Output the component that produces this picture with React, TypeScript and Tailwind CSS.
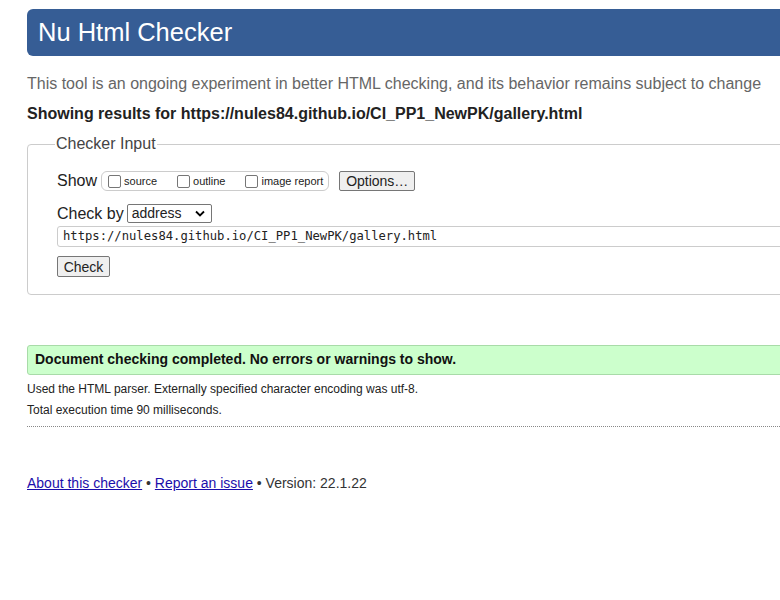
import React from "react";

const sans = { fontFamily: '"Liberation Sans", Arial, sans-serif' };

const Box = () => (
  <span className="inline-block w-[13px] h-[13px] border border-[#767676] rounded-[2px] bg-white mr-[3px] align-[-2px]" />
);

export default function App() {
  return (
    <div className="w-[780px] h-[600px] overflow-hidden bg-white text-[#222]" style={sans}>
      <div className="w-[900px] pl-[27px] pt-[9px]">
        <header className="h-[47px] bg-[#365d95] rounded-l-[6px] flex items-center pl-[11px]">
          <h1 className="text-white text-[25.5px] leading-none">Nu Html Checker</h1>
        </header>

        <p className="mt-[19px] text-[16px] text-[#666] leading-[18px]">
          This tool is an ongoing experiment in better HTML checking, and its behavior remains subject to change
        </p>
        <p className="mt-[12px] text-[16px] font-bold text-[#222] leading-[18px]">
          Showing results for https://nules84.github.io/CI_PP1_NewPK/gallery.html
        </p>

        <fieldset className="mt-[12px] border border-[#ccc] rounded-[4px] pl-[29px] pr-0 pb-[15px] pt-[6px]">
          <legend className="text-[16px] text-[#444] px-[1px] ml-[-2px] leading-[18px]">Checker Input</legend>

          <div className="flex items-center h-[20px] mt-[12px]">
            <span className="text-[16px] mr-[4px]">Show</span>
            <span className="h-[20px] border border-[#ccc] rounded-[6px] flex items-center pl-[6px] pr-[5px] text-[11px]">
              <label className="flex items-center"><Box />source</label>
              <label className="flex items-center ml-[20px]"><Box />outline</label>
              <label className="flex items-center ml-[20px]"><Box />image report</label>
            </span>
            <button className="ml-[10px] h-[20px] w-[76px] border border-[#767676] rounded-[2px] bg-[#efefef] text-[14px] leading-none">
              Options…
            </button>
          </div>

          <div className="flex items-center mt-[13px] h-[19px]">
            <span className="text-[16px] mr-[3px]">Check by</span>
            <span className="h-[19px] w-[85px] border border-[#767676] rounded-[2px] bg-white flex items-center justify-between pl-[4px] pr-[6px] text-[14px]">
              address
              <svg width="10" height="7" viewBox="0 0 10 7">
                <path d="M1 1.5 L5 5.5 L9 1.5" stroke="#000" strokeWidth="1.8" fill="none" />
              </svg>
            </span>
          </div>

          <div className="mt-[3px] h-[21px] border border-[#ccc] rounded-l-[3px] flex items-center pl-[5px] text-[12.2px]" style={{ fontFamily: '"DejaVu Sans Mono", monospace' }}>
            https://nules84.github.io/CI_PP1_NewPK/gallery.html
          </div>

          <button className="mt-[9px] h-[21px] w-[53px] border border-[#767676] rounded-[2px] bg-[#efefef] text-[14px] leading-none">
            Check
          </button>
        </fieldset>

        <div className="mt-[50px] h-[30px] bg-[#ccffcc] border border-[#a8dba8] rounded-l-[3px] flex items-center pl-[7px] text-[14px] font-bold text-[#111]">
          Document checking completed. No errors or warnings to show.
        </div>

        <p className="mt-[7px] text-[12px] leading-[14px]">Used the HTML parser. Externally specified character encoding was utf-8.</p>
        <p className="mt-[7px] text-[12px] leading-[14px]">Total execution time 90 milliseconds.</p>

        <div className="mt-[9px] border-t border-dotted border-[#888]" />

        <p className="mt-[48px] text-[14px] leading-[16px] text-[#333]">
          <a href="#" className="text-[#1a0dab] underline">About this checker</a> •{" "}
          <a href="#" className="text-[#1a0dab] underline">Report an issue</a> • Version: 22.1.22
        </p>
      </div>
    </div>
  );
}
